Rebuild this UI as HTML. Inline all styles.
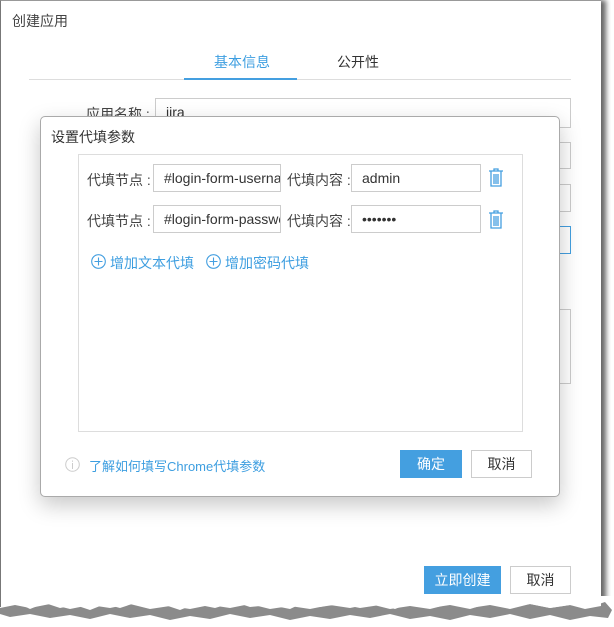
<!DOCTYPE html>
<html><head><meta charset="utf-8"><style>
*{box-sizing:border-box;margin:0;padding:0}
body{width:614px;height:627px;background:#fff;position:relative;overflow:hidden;font-family:"Liberation Sans","Noto Sans CJK SC",sans-serif;color:#333;font-size:13px}
.abs{position:absolute}
.win{left:0;top:0;width:601px;height:620px;background:#fff;border-left:1px solid #777;border-top:1px solid #999;box-shadow:5px 0 5px rgba(0,0,0,.6)}
.inp{position:absolute;border:1px solid #ccc;background:#fff;height:28px;line-height:26px;padding-left:10px;font-size:14px;color:#333;overflow:hidden;white-space:nowrap}
.lbl{position:absolute;font-size:14px;color:#444;white-space:nowrap}
.btn{position:absolute;height:28px;line-height:26px;text-align:center;font-size:14px;border:1px solid #ccc;background:#fff;color:#333}
.blue{background:#449fe0;border-color:#449fe0;color:#fff}
.link{color:#3d9ee0}
</style></head><body>
<div class="abs win"></div>
<div class="abs" style="left:12px;top:11px;font-size:14px;color:#444">创建应用</div>
<div class="abs" style="left:214px;top:52px;font-size:14px;color:#3d9ee0">基本信息</div>
<div class="abs" style="left:337px;top:52px;font-size:14px;color:#333">公开性</div>
<div class="abs" style="left:29px;top:79px;width:542px;height:1px;background:#ddd"></div>
<div class="abs" style="left:184px;top:78px;width:113px;height:2px;background:#449fe0"></div>
<div class="lbl" style="left:86px;top:104px">应用名称 :</div>
<div class="inp" style="left:155px;top:98px;width:416px;height:30px">jira</div>
<div class="abs" style="left:558px;top:142px;width:13px;height:27px;border:1px solid #ccc;border-left:none"></div>
<div class="abs" style="left:558px;top:184px;width:13px;height:28px;border:1px solid #ccc;border-left:none"></div>
<div class="abs" style="left:558px;top:226px;width:13px;height:28px;border:1px solid #449fe0;border-left:none"></div>
<div class="abs" style="left:558px;top:309px;width:13px;height:75px;border:1px solid #ccc;border-left:none"></div>

<div class="abs" style="left:40px;top:116px;width:520px;height:381px;background:#fff;border:1px solid #aaa;border-radius:5px;box-shadow:0 8px 22px rgba(0,0,0,.22)"></div>
<div class="abs" style="left:51px;top:127px;font-size:14px;color:#333">设置代填参数</div>
<div class="abs" style="left:78px;top:154px;width:445px;height:278px;border:1px solid #ddd"></div>

<div class="lbl" style="left:87px;top:170px">代填节点 :</div>
<div class="inp" style="left:153px;top:164px;width:128px">#login-form-username</div>
<div class="lbl" style="left:287px;top:170px">代填内容 :</div>
<div class="inp" style="left:351px;top:164px;width:130px">admin</div>
<div class="lbl" style="left:87px;top:211px">代填节点 :</div>
<div class="inp" style="left:153px;top:205px;width:128px">#login-form-password</div>
<div class="lbl" style="left:287px;top:211px">代填内容 :</div>
<div class="inp" style="left:351px;top:205px;width:130px;font-size:14px;letter-spacing:0">•••••••</div>
<svg class="abs" style="left:488px;top:168px" width="16" height="19" viewBox="0 0 16 19" fill="none" stroke="#449fe0" stroke-width="1.3"><path d="M1 3h14M6 3V1h4v2M3 3v15h10V3M6 6v10M8 6v10M10 6v10"/></svg>
<svg class="abs" style="left:488px;top:210px" width="16" height="19" viewBox="0 0 16 19" fill="none" stroke="#449fe0" stroke-width="1.3"><path d="M1 3h14M6 3V1h4v2M3 3v15h10V3M6 6v10M8 6v10M10 6v10"/></svg>

<svg class="abs" style="left:91px;top:254px" width="15" height="15" viewBox="0 0 15 15" fill="none" stroke="#449fe0" stroke-width="1.1"><circle cx="7.5" cy="7.5" r="6.8"/><path d="M7.5 3.5v8M3.5 7.5h8"/></svg>
<div class="abs link" style="left:110px;top:253px;font-size:14px">增加文本代填</div>
<svg class="abs" style="left:206px;top:254px" width="15" height="15" viewBox="0 0 15 15" fill="none" stroke="#449fe0" stroke-width="1.1"><circle cx="7.5" cy="7.5" r="6.8"/><path d="M7.5 3.5v8M3.5 7.5h8"/></svg>
<div class="abs link" style="left:225px;top:253px;font-size:14px">增加密码代填</div>

<svg class="abs" style="left:65px;top:457px" width="15" height="15" viewBox="0 0 15 15" fill="none" stroke="#ccc" stroke-width="1"><circle cx="7.5" cy="7.5" r="6.8"/><path d="M7.5 6v6M7.5 3.5v1.2"/></svg>
<div class="abs link" style="left:89px;top:456px;font-size:13px">了解如何填写Chrome代填参数</div>
<div class="btn blue" style="left:400px;top:450px;width:62px">确定</div>
<div class="btn" style="left:471px;top:450px;width:61px">取消</div>

<div class="btn blue" style="left:424px;top:566px;width:77px">立即创建</div>
<div class="btn" style="left:510px;top:566px;width:61px">取消</div>

<svg class="abs" style="left:0;top:596px" width="614" height="31" viewBox="0 0 614 31">
<polygon fill="#fff" points="0,0 614,0 614,31 0,31"/>
<polygon fill="#777" opacity=".85" points="0,10 20,8 30,13 45,7 60,12 75,9 90,14 105,8 120,12 135,7 150,11 165,9 180,14 195,8 215,12 235,6 250,11 270,9 290,13 305,6 320,11 340,8 360,12 380,9 395,13 410,7 430,12 450,9 470,13 490,7 510,11 530,8 550,12 570,9 590,11 605,6 612,14 608,22 590,20 570,24 550,19 530,23 510,18 490,22 470,19 450,24 430,20 410,23 390,18 370,22 350,19 330,23 310,20 290,24 270,19 250,22 230,18 210,23 190,20 170,24 150,19 130,22 110,18 90,23 70,19 50,22 30,18 10,21 0,18"/>
<polygon fill="#fff" points="0,0 601,0 601,10 585,13 570,9 550,12 530,8 510,13 490,9 470,12 450,8 430,13 410,10 390,13 370,8 350,12 330,9 310,13 290,10 270,13 250,8 230,12 210,9 190,13 170,10 150,13 130,8 110,12 90,9 70,13 50,8 30,12 15,9 0,12"/>
<rect x="0" y="0" width="1" height="11" fill="#777"/>
</svg>
</body></html>
